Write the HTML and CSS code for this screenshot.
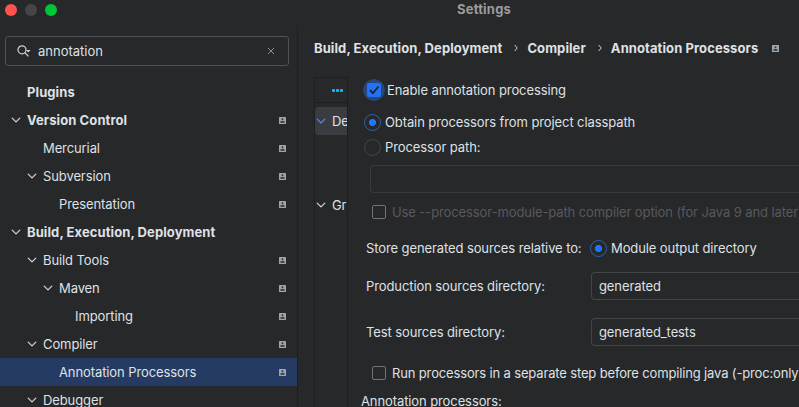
FILE: index.html
```html
<!DOCTYPE html>
<html lang="en">
<head>
<meta charset="utf-8">
<title>Settings</title>
<link rel="stylesheet" href="styles.css">
</head>
<body>
<svg class="defs" width="0" height="0" aria-hidden="true">
  <symbol id="chevron" viewBox="0 0 10 10"><path d="M1.200 3.100 5 6.900 8.800 3.100" fill="none" stroke="currentColor" stroke-width="1.300" stroke-linecap="round" stroke-linejoin="round"/></symbol>
  <symbol id="project" viewBox="0 0 7 7"><rect width="7" height="7" rx=".5" fill="#9aa7b0"/><circle cx="3.500" cy="2.300" r="1" fill="#34383b"/><path d="M1.300 5.700V5C1.300 4.400 2.200 4 3.500 4S5.700 4.400 5.700 5V5.700Z" fill="#34383b"/></symbol>
</svg>
<div class="window">
  <header class="titlebar"><div class="lights"><i class="red"></i><i class="gray"></i><i class="green"></i></div><h1>Settings</h1></header>
  <div class="content">
    <aside class="sidebar">
      <div class="search">
        <svg width="14" height="13" viewBox="0 0 14 13"><g fill="none" stroke="#ced0d6" stroke-width="1.250"><circle cx="5" cy="4.800" r="4"/><path d="m7.900 7.700 3.700 3.700"/></g><path d="M9 5h4.500l-2.250 2.400z" fill="#ced0d6"/></svg>
        <span>annotation</span>
        <svg class="clear" width="8" height="8" viewBox="0 0 8 8"><path d="m1 1 6 6m0-6-6 6" stroke="#87939a" fill="none"/></svg>
      </div>
      <ul class="tree">
        <li class="l0 bold"><i></i><span>Plugins</span></li>
        <li class="l0 bold"><svg class="chev"><use href="#chevron"/></svg><span>Version Control</span><svg class="proj"><use href="#project"/></svg></li>
        <li class="l1"><i></i><span>Mercurial</span><svg class="proj"><use href="#project"/></svg></li>
        <li class="l1"><svg class="chev"><use href="#chevron"/></svg><span>Subversion</span><svg class="proj"><use href="#project"/></svg></li>
        <li class="l2"><i></i><span>Presentation</span><svg class="proj"><use href="#project"/></svg></li>
        <li class="l0 bold"><svg class="chev"><use href="#chevron"/></svg><span>Build, Execution, Deployment</span></li>
        <li class="l1"><svg class="chev"><use href="#chevron"/></svg><span>Build Tools</span><svg class="proj"><use href="#project"/></svg></li>
        <li class="l2"><svg class="chev"><use href="#chevron"/></svg><span>Maven</span><svg class="proj"><use href="#project"/></svg></li>
        <li class="l3"><i></i><span>Importing</span><svg class="proj"><use href="#project"/></svg></li>
        <li class="l1"><svg class="chev"><use href="#chevron"/></svg><span>Compiler</span><svg class="proj"><use href="#project"/></svg></li>
        <li class="l2 selected"><i></i><span>Annotation Processors</span><svg class="proj"><use href="#project"/></svg></li>
        <li class="l1"><svg class="chev"><use href="#chevron"/></svg><span>Debugger</span></li>
      </ul>
    </aside>
    <main>
      <nav class="crumbs bold">
        <span>Build, Execution, Deployment</span><svg class="sep" viewBox="0 0 4 8"><path d="m.7 1 2.500 3-2.500 3"/></svg>
        <span>Compiler</span><svg class="sep" viewBox="0 0 4 8"><path d="m.7 1 2.500 3-2.500 3"/></svg>
        <span>Annotation Processors</span><svg class="proj"><use href="#project"/></svg>
      </nav>
      <div class="split">
        <section class="profiles">
          <div class="toolbar"><i></i><i></i><i></i></div>
          <div class="profile active"><svg class="chev"><use href="#chevron"/></svg><span>De</span></div>
          <div class="profile second"><svg class="chev"><use href="#chevron"/></svg><span>Gr</span></div>
        </section>
        <section class="form">
          <div class="row enable"><b class="check on"><svg width="14" height="14" viewBox="0 0 14 14"><path d="m3 7.200 2.900 3 5.600-6.700" fill="none" stroke="#1e2024" stroke-width="1.700"/></svg></b><span>Enable annotation processing</span></div>
          <div class="row obtain"><b class="radio on"></b><span>Obtain processors from project classpath</span></div>
          <div class="row path"><b class="radio"></b><span>Processor path:</span></div>
          <div class="field disabled"></div>
          <div class="row module disabled"><b class="check"></b><span>Use --processor-module-path compiler option (for Java 9 and later)</span></div>
          <div class="row store"><span class="label">Store generated sources relative to:</span><b class="radio on"></b><span class="opt">Module output directory</span></div>
          <div class="row dir prod"><span class="label">Production sources directory:</span><div class="field"><span>generated</span></div></div>
          <div class="row dir test"><span class="label">Test sources directory:</span><div class="field"><span>generated_tests</span></div></div>
          <div class="row run"><b class="check"></b><span>Run processors in a separate step before compiling java (-proc:only)</span></div>
          <div class="row last"><span>Annotation processors:</span></div>
        </section>
      </div>
    </main>
  </div>
</div>
</body>
</html>
```
FILE: styles.css
```css
* { box-sizing: border-box; }
body { margin: 0; background: #27282a; color: #dfe1e5; font: 13px/16px Inter, "Liberation Sans", sans-serif; letter-spacing: -.1px; overflow: hidden; }
.defs { display: none; }
.window { width: 799px; height: 407px; overflow: hidden; display: flex; flex-direction: column; }
span { white-space: nowrap; }
svg { display: block; flex: none; }
.bold { font-weight: 700; letter-spacing: .09px; }
.titlebar { height: 26px; flex: none; display: grid; grid-template-columns: 457px 1fr; }
.lights { display: flex; gap: 8px; padding: 4px 0 0 5px; }
.lights i { width: 12px; height: 12px; border-radius: 50%; }
.red { background: #ff544d; }
.gray { background: #464648; }
.green { background: #00c537; }
h1 { margin: 1px 0 0; font-size: 13px; line-height: 16px; font-weight: 700; letter-spacing: .2px; color: #9b9c9e; }
.content { display: flex; flex: 1; min-height: 0; }
.sidebar { width: 298px; flex: none; border-right: 1px solid #1e1f22; padding-top: 10px; }
.search { display: flex; align-items: center; height: 30px; width: 284px; margin-left: 5px; padding: 0 13px 0 11px; border: 1px solid #4e5157; border-radius: 3px; }
.search span { margin-left: 7px; letter-spacing: 0; }
.clear { margin-left: auto; }
.tree { list-style: none; margin: 12px 0 0; padding: 0; }
.tree li { height: 28px; display: flex; align-items: center; padding: 0 11px; }
.tree i { width: 10px; }
.tree span { margin-left: 6px; }
.tree .l1 { padding-left: 27px; }
.tree .l2 { padding-left: 43px; }
.tree .l3 { padding-left: 59px; }
.tree .selected { background: #263b64; }
.chev { width: 10px; height: 10px; color: #ced0d6; }
.proj { width: 7px; height: 7px; margin-left: auto; }
main { flex: 1; min-width: 0; padding-left: 16px; display: flex; flex-direction: column; }
.crumbs { height: 51px; flex: none; display: flex; align-items: center; padding-bottom: 7px; }
.crumbs .proj { margin-left: 14px; margin-top: 1px; }
.sep { width: 4px; height: 8px; margin: 0 9px 0 12px; fill: none; stroke: #ced0d6; }
.split { flex: 1; display: flex; min-height: 0; }
.profiles { width: 34px; flex: none; border: solid #1e1f22; border-width: 1px 1px 0; overflow: hidden; }
.toolbar { height: 25px; border-bottom: 1px solid #1e1f22; display: flex; align-items: center; gap: 1px; padding-left: 17px; }
.toolbar i { width: 3px; height: 3px; border-radius: 1px; background: #1fb2ee; }
.profile { height: 28px; display: flex; align-items: center; padding-left: 1px; }
.profile span { margin-left: 6px; }
.active { margin-top: 4px; background: #3b3c41; border-radius: 4px 0 0 4px; }
.active .chev { color: #548af7; }
.second { margin-top: 56px; }
.form { flex: 1; min-width: 0; padding: 1px 0 0 13px; overflow: hidden; }
.row { display: flex; align-items: center; height: 22px; }
.check { width: 14px; height: 14px; flex: none; border: 1px solid #6f737a; border-radius: 2px; }
.check.on { border: 0; background: #2372f5; }
.radio { width: 17px; height: 17px; flex: none; border: 1px solid #43454a; border-radius: 50%; }
.radio.on { border-color: #2662c4; background: radial-gradient(circle, #2273ff 0 3.300px, transparent 3.800px); }
.enable .check { margin: 0 6px; }
.enable { height: 24px; background: radial-gradient(circle at 13px 12px, #284678 0 10.500px, transparent 11px); }
.obtain { margin: 9px 0 0 3px; }
.path { margin: 3px 0 0 3px; }
.obtain span, .path span { margin-left: 4px; }
.field { height: 28px; border: 1px solid #43454a; border-right: 0; border-radius: 4px 0 0 4px; display: flex; align-items: center; padding-left: 7px; }
.form > .field { margin: 7px 0 0 9px; border-color: #393b3e; }
.module { margin: 8px 0 0 11px; color: #57595e; }
.module span, .run span { margin-left: 6px; }
.store { margin: 14px 0 0 5px; }
.store .radio { margin-top: 1px; }
.label { width: 225px; flex: none; }
.store .label { width: 224px; }
.store .opt { margin-left: 4px; }
.dir { margin-left: 5px; height: 28px; }
.dir .field { flex: 1; }
.prod { margin-top: 13px; }
.test { margin-top: 18px; }
.run { margin: 16px 0 0 11px; letter-spacing: -.15px; }
.last { margin-top: 6px; }
```
